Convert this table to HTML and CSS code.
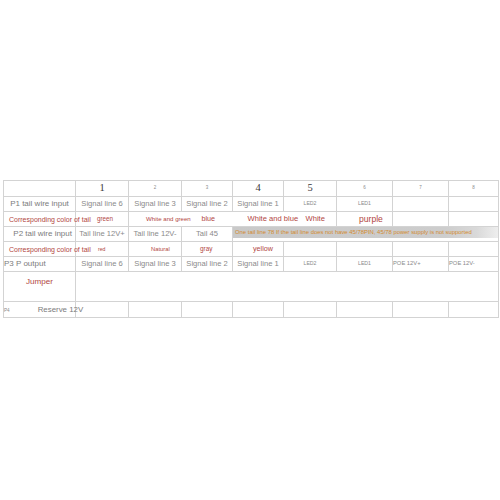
FILE: index.html
```html
<!DOCTYPE html>
<html>
<head>
<meta charset="utf-8">
<link rel="stylesheet" href="styles.css">
</head>
<body>
<table class="sheet">
  <colgroup>
    <col class="c0"><col class="c1"><col class="c2"><col class="c3"><col class="c4"><col class="c5"><col class="c6"><col class="c7"><col class="c8">
  </colgroup>
  <tr class="r-head">
    <td></td>
    <td class="num big">1</td>
    <td class="num tiny">2</td>
    <td class="num tiny">3</td>
    <td class="num big">4</td>
    <td class="num big">5</td>
    <td class="num tiny">6</td>
    <td class="num tiny">7</td>
    <td class="num tiny">8</td>
  </tr>
  <tr class="r-std">
    <td class="lbl">P1 tail wire input</td>
    <td class="sig">Signal line 6</td>
    <td class="sig">Signal line 3</td>
    <td class="sig">Signal line 2</td>
    <td class="sig">Signal line 1</td>
    <td class="sm">LED2</td>
    <td class="sm">LED1</td>
    <td></td>
    <td></td>
  </tr>
  <tr class="r-std">
    <td class="corr">Corresponding color of tail</td>
    <td class="red c-green">green</td>
    <td class="red c-wg">White and green</td>
    <td class="red c-blue nol">blue</td>
    <td class="red c-wb nol">White and blue</td>
    <td class="red c-white nol">White</td>
    <td class="red c-purple">purple</td>
    <td></td>
    <td></td>
  </tr>
  <tr class="r-std">
    <td class="lbl lbl2">P2 tail wire input</td>
    <td class="sig">Tail line 12V+</td>
    <td class="sig">Tail line 12V-</td>
    <td class="sig">Tail 45</td>
    <td class="note" colspan="5"><span class="note-band">One tail line 78 If the tail line does not have 45/78PIN, 45/78 power supply is not supported</span></td>
  </tr>
  <tr class="r-std">
    <td class="corr">Corresponding color of tail</td>
    <td class="red c-red">red</td>
    <td class="red c-nat">Natural</td>
    <td class="red c-gray">gray</td>
    <td class="red c-yellow">yellow</td>
    <td></td>
    <td></td>
    <td></td>
    <td></td>
  </tr>
  <tr class="r-std">
    <td class="lbl lbl3">P3 P output</td>
    <td class="sig">Signal line 6</td>
    <td class="sig">Signal line 3</td>
    <td class="sig">Signal line 2</td>
    <td class="sig">Signal line 1</td>
    <td class="sm">LED2</td>
    <td class="sm">LED1</td>
    <td class="sm poe">POE 12V+</td>
    <td class="sm poe">POE 12V-</td>
  </tr>
  <tr class="r-tall">
    <td class="jumper">Jumper</td>
    <td colspan="8"></td>
  </tr>
  <tr class="r-last">
    <td class="lbl4"><span class="p4">P4</span><span class="reserve">Reserve 12V</span></td>
    <td></td>
    <td></td>
    <td></td>
    <td></td>
    <td></td>
    <td></td>
    <td></td>
    <td></td>
  </tr>
</table>
</body>
</html>
```
FILE: styles.css
```css
html, body {
  margin: 0;
  padding: 0;
  background: #ffffff;
}

body {
  font-family: "Liberation Sans", Arial, sans-serif;
  color: #7a7a7a;
}

.sheet {
  margin: 180px 0 0 3px;
  width: 495px;
  table-layout: fixed;
  border-collapse: collapse;
  border: 1px solid #b9b9b9;
}

.c0 { width: 72px; }
.c1 { width: 53px; }
.c2 { width: 53px; }
.c3 { width: 51px; }
.c4 { width: 51px; }
.c5 { width: 53px; }
.c6 { width: 56px; }
.c7 { width: 56px; }
.c8 { width: 50px; }

.sheet td {
  border: 1px solid #d3d3d3;
  padding: 0;
  white-space: nowrap;
  overflow: visible;
  text-align: center;
  vertical-align: middle;
  line-height: 1;
  font-size: 7.6px;
}

.r-head td { height: 15px; }
.r-std td { height: 14px; }
.r-tall td { height: 23px; }
.r-last td { height: 15px; }

.num.big {
  font-family: "Liberation Serif", "Times New Roman", serif;
  font-size: 10.5px;
  color: #3a3a3a;
}

.num.tiny {
  font-size: 4.5px;
  color: #8a8a8a;
}

.sheet td.lbl {
  font-size: 8px;
  color: #7c7c7c;
}

.sheet td.lbl2 {
  text-align: right;
  padding-right: 3px;
}

.sheet td.lbl3 {
  text-align: left;
  padding-left: 0;
}

.sheet td.sig {
  font-size: 7.6px;
  color: #8a8a8a;
}

.sheet td.sm {
  font-size: 5.2px;
  color: #8a8a8a;
}

.sheet td.poe {
  text-align: left;
  font-size: 5.8px;
}

.sheet td.corr {
  font-size: 7px;
  color: #b2463f;
  text-align: left;
  padding-left: 5px;
}

.sheet td.red {
  color: #b2463f;
  text-align: left;
}

.sheet td.nol {
  border-left-style: hidden;
}

.sheet td.c-green { font-size: 6.3px; padding-left: 21px; }
.sheet td.c-wg { font-size: 6.1px; padding-left: 17px; }
.sheet td.c-blue { font-size: 7.2px; padding-left: 20px; }
.sheet td.c-wb { font-size: 7.6px; padding-left: 15px; }
.sheet td.c-white { font-size: 7.6px; padding-left: 22px; }
.sheet td.c-purple { font-size: 8.6px; padding-left: 22px; }
.sheet td.c-red { font-size: 5.2px; padding-left: 22px; padding-top: 2px; height: 12px; }
.sheet td.c-nat { font-size: 5.8px; padding-left: 22px; padding-top: 1px; height: 13px; }
.sheet td.c-gray { font-size: 6.4px; padding-left: 18px; }
.sheet td.c-yellow { font-size: 7.2px; padding-left: 20px; }

.sheet td.note {
  text-align: left;
  vertical-align: top;
  padding: 0;
}

.note-band {
  display: block;
  height: 12px;
  line-height: 12px;
  margin-top: -1px;
  padding-left: 2px;
  font-size: 5.9px;
  color: #d38a2e;
  background: linear-gradient(to right, #c9c9c9 0%, #cdcdcd 80%, #d9d9d9 92%, #eeeeee 100%);
}

.sheet td.jumper {
  vertical-align: top;
  text-align: left;
  padding-left: 22px;
  padding-top: 6px;
  font-size: 8.1px;
  color: #b2463f;
}

.sheet td.lbl4 {
  text-align: left;
  padding-left: 0;
}

.p4 {
  font-size: 4.6px;
  color: #8a8a8a;
}

.reserve {
  margin-left: 28px;
  font-size: 7.9px;
  color: #7c7c7c;
}
```
